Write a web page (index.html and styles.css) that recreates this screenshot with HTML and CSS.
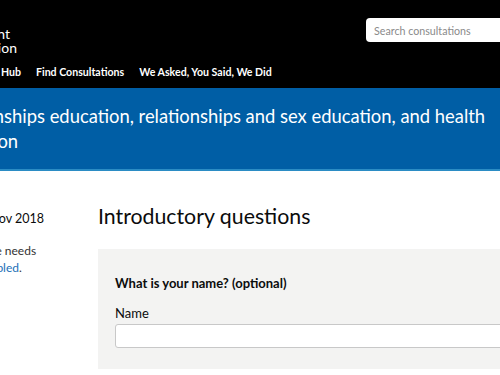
FILE: index.html
```html
<!DOCTYPE html>
<html>
<head>
    <meta charset="UTF-8">
    <title>Relationships education consultation</title>
    <link rel="stylesheet" href="styles.css">
</head>
<body>
    <header class="site-header">
        <div class="wrap">
            <div class="header-top">
                <div class="logo">
                    <span class="logo-line logo-line-top">Department</span>
                    <span class="logo-line">for Education</span>
                </div>
                <input class="search" type="text" placeholder="Search consultations">
            </div>
            <nav class="main-nav">
                <a href="#">Consultation Hub</a>
                <a href="#">Find Consultations</a>
                <a href="#">We Asked, You Said, We Did</a>
            </nav>
        </div>
    </header>

    <div class="banner">
        <div class="wrap">
            <h1>Relationships education, relationships and sex education, and health education</h1>
        </div>
    </div>

    <div class="wrap content">
        <aside class="sidebar">
            <p class="dates">Closes 7 Nov 2018</p>
            <p class="note">This service needs scripts <a href="#">enabled</a>.</p>
        </aside>

        <main class="main">
            <h2>Introductory questions</h2>
            <div class="question">
                <h3>What is your name? (optional)</h3>
                <label for="name">Name</label>
                <input id="name" class="text-input" type="text">
            </div>
        </main>
    </div>
</body>
</html>
```

FILE: styles.css
```css
/* page styles */
:root {
    --black: #000000;
    --blue: #005ea5;
    --blue-light: #2b8cc4;
    --text: #0b0c0c;
    --link: #1d70b8;
    --panel: #f3f3f2;
    --border: #c8c8c8;
}

* {
    margin: 0;
    padding: 0;
    box-sizing: border-box;
}

html, body {
    overflow: hidden;
}

body {
    font-family: Lato, "Open Sans", sans-serif;
    color: var(--text);
    background: #ffffff;
}

.wrap {
    margin-left: -58px;
    width: 604px;
}

.site-header {
    background: var(--black);
    color: #ffffff;
    height: 88px;
}

.header-top {
    display: flex;
    align-items: flex-start;
    justify-content: space-between;
    padding-top: 18px;
}

/* logo text lines end at the right edge of the box */
.logo {
    width: 120px;
    margin-left: -45px;
    text-align: right;
    font-size: 14px;
    line-height: 14px;
    padding-top: 9px;
}

.logo-line {
    display: block;
    white-space: nowrap;
}

.logo-line-top {
    padding-right: 7px;
}

.search {
    width: 180px;
    height: 24px;
    border: none;
    border-radius: 4px;
    padding: 0 8px;
    font-family: inherit;
    font-size: 10.7px;
}

.search::placeholder {
    color: #8a8a8a;
}

.main-nav {
    display: flex;
    gap: 15px;
    margin-top: 7px;
    margin-left: -4px;
}

.main-nav a {
    color: #ffffff;
    text-decoration: none;
    font-size: 10.6px;
    font-weight: 700;
    line-height: 20px;
}

.banner {
    background: var(--blue);
    border-bottom: 2px solid var(--blue-light);
    height: 83px;
}

.banner h1 {
    color: #ffffff;
    font-weight: 400;
    font-size: 18.4px;
    line-height: 25px;
    width: 590px;
    padding-top: 16px;
    margin-left: -4px;
}

.content {
    display: grid;
    grid-template-columns: 140px 1fr;
    gap: 16px;
    width: 800px;
}

.sidebar {
    padding-top: 39px;
    padding-right: 30px;
    margin-left: -2px;
}

.dates {
    font-size: 12.5px;
    line-height: 18px;
}

.note {
    font-size: 12px;
    line-height: 17px;
    margin-top: 14px;
    color: #333333;
}

.note a {
    color: var(--link);
    text-decoration: none;
}

.main h2 {
    font-size: 21.3px;
    font-weight: 400;
    line-height: 28px;
    padding-top: 31px;
}

.question {
    background: var(--panel);
    margin-top: 19px;
    padding: 25px 17px 21px;
}

.question h3 {
    font-size: 13px;
    font-weight: 700;
    line-height: 18px;
}

.question label {
    display: block;
    font-size: 13px;
    line-height: 18px;
    margin-top: 12px;
}

.text-input {
    display: block;
    width: 100%;
    height: 24px;
    margin-top: 2px;
    border: 1px solid var(--border);
    border-radius: 3px;
    background: #ffffff;
}
```
